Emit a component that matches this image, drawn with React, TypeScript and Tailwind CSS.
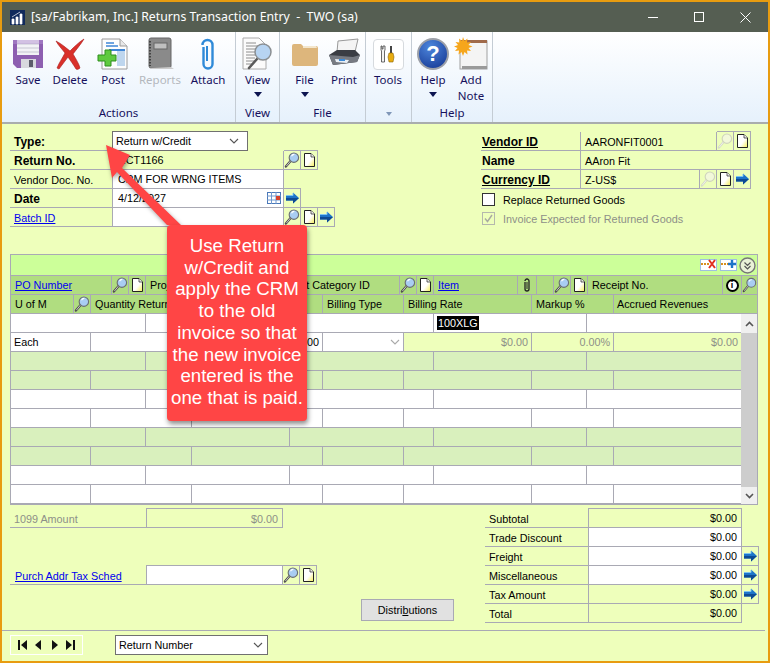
import type { ReactNode } from "react";

const ui = "font-['Liberation_Sans',Arial,sans-serif] text-[10.8px] leading-[18px] text-black";
const line = "border-[#a9a9b4]";

function SearchIcon({ off = false }: { off?: boolean }) {
  return (
    <svg width="17" height="18" viewBox="0 0 17 18">
      <path d="M7 10 2 16" stroke={off ? "#d6dcc4" : "#4a4a4a"} strokeWidth="2.4" strokeLinecap="round" />
      <path d="M7 10 2.5 15.5" stroke="#f5f5f5" strokeWidth="0.8" />
      <circle cx="10.5" cy="6.5" r="5" fill={off ? "#f2f8da" : "#a9cdf2"} stroke={off ? "#cfd4bd" : "#6b6f72"} strokeWidth="1.2" />
      {!off && <path d="M8 5a3 3 0 0 1 3-2" stroke="#fff" strokeWidth="1.2" fill="none" />}
    </svg>
  );
}

function NoteIcon() {
  return (
    <svg width="15" height="16" viewBox="0 0 15 16">
      <defs>
        <linearGradient id="noteFill" x1="0" y1="0" x2="1" y2="1">
          <stop offset="0.55" stopColor="#ffffff" />
          <stop offset="1" stopColor="#f6ee50" />
        </linearGradient>
      </defs>
      <path d="M2.5 1.5h6.5l3.5 3.5v9.500h-10z" fill="url(#noteFill)" stroke="#222" />
      <path d="M9 1.500v3.500h3.500" fill="#eee" stroke="#222" strokeWidth="0.7" />
    </svg>
  );
}

function GoIcon() {
  return (
    <svg width="15" height="14" viewBox="0 0 15 14">
      <path d="M8 1.500 14 7l-6 5.500V9.500H1v-5h7z" fill="#1d74c9" />
      <path d="M8 9.500H1V7h13l-6 5.500z" fill="#0d4a94" />
      <path d="M1 4.500h7V2" stroke="#7ec6f2" fill="none" />
    </svg>
  );
}

function Chevron({ color = "#555" }: { color?: string }) {
  return (
    <svg width="10" height="6" viewBox="0 0 10 6">
      <path d="M1 1l4 4 4-4" stroke={color} fill="none" strokeWidth="1.100" />
    </svg>
  );
}

function Cal() {
  return (
    <svg width="14" height="12" viewBox="0 0 14 12">
      <rect x="0.500" y="0.500" width="13" height="11" fill="#fff" stroke="#4a78b8" />
      <path d="M0 4h14M0 8h14M4.500 0v12M9 0v12" stroke="#6f98cf" />
      <rect x="9" y="4" width="4" height="4" fill="#d8402a" />
    </svg>
  );
}

function SmallCell({ children, w = "w-[17px]" }: { children?: ReactNode; w?: string }) {
  return (
    <div className={`${w} h-[20px] -mt-px shrink-0 flex items-center justify-center border border-l-0 ${line}`}>
      {children}
    </div>
  );
}

function FieldRow({
  label,
  labelClass = "",
  labelW,
  valueW,
  bg = "bg-[#eeffbb]",
  children,
  icons,
}: {
  label: ReactNode;
  labelClass?: string;
  labelW: string;
  valueW: string;
  bg?: string;
  children?: ReactNode;
  icons?: ReactNode;
}) {
  return (
    <div className="flex h-[19px] leading-[20px]">
      <div className={`${labelW} shrink-0 border-b ${line} pl-[4px] ${labelClass}`}>{label}</div>
      <div className={`${valueW} ${bg} shrink-0 border-l border-b border-r ${line} pl-[4px] flex items-center justify-between`}>
        {children}
      </div>
      {icons}
    </div>
  );
}

const link = "text-[#0000ee] underline";

function Field({ label, value, bold, linkLabel, white, icons, cal }: {
  label: string;
  value?: string;
  bold?: boolean;
  linkLabel?: boolean;
  white?: boolean;
  icons?: ReactNode;
  cal?: boolean;
}) {
  return (
    <FieldRow
      label={linkLabel ? <span className={link}>{label}</span> : label}
      labelClass={bold ? "font-bold text-[12px]" : ""}
      labelW="w-[102px]"
      valueW="w-[172px]"
      bg={white ? "bg-white" : "bg-[#eeffbb]"}
      icons={icons}
    >
      <span className="pl-[1px]">{value}</span>
      {cal && <span className="pr-[2px] flex"><Cal /></span>}
    </FieldRow>
  );
}

function VendorRow({ label, value, bold, icons, w }: { label: string; value: string; bold?: boolean; icons?: ReactNode; w: string }) {
  return (
    <div className="flex h-[19px] leading-[20px]">
      <div className={`w-[99px] shrink-0 border-b ${line} pl-[1px] font-bold text-[12px]`}>
        {bold ? <span className="underline">{label}</span> : label}
      </div>
      <div className={`${w} shrink-0 border-l border-b border-r ${line} pl-[4px]`}>{value}</div>
      {icons}
    </div>
  );
}

const rowA = ["w-[135px]", "w-[144px]", "w-[144px]", "w-[153px]", "w-[154px]"];
const rowB = ["w-[80px]", "w-[101px]", "w-[131px]", "w-[81px]", "w-[128px]", "w-[82px]", "w-[127px]"];

function BlankRow({ cols, bg }: { cols: string[]; bg: string }) {
  return (
    <div className={`flex h-[19px] border-b ${line} ${bg}`}>
      {cols.map((c, i) => (
        <div key={i} className={`${c} h-full ${i < cols.length - 1 ? `border-r ${line}` : ""}`} />
      ))}
    </div>
  );
}

function HeadCell({ w, children, icon }: { w: string; children?: ReactNode; icon?: boolean }) {
  return (
    <div className={`${w} shrink-0 h-full border-r ${line} ${icon ? "flex items-center justify-center" : "pl-[4px]"} whitespace-nowrap overflow-hidden`}>
      {children}
    </div>
  );
}

function RibbonButton({ w, label, icon, arrow, gray }: { w: string; label: ReactNode; icon: ReactNode; arrow?: boolean; gray?: boolean }) {
  return (
    <div className={`${w} flex flex-col items-center`}>
      <div className="h-[40px] pt-[4px] flex items-center justify-center">{icon}</div>
      <div className={`text-center leading-[16px] ${gray ? "text-[#b4b8bd]" : "text-[#16105c]"}`}>{label}</div>
      {arrow && <div className="mt-[4px] w-0 h-0 border-x-[4px] border-x-transparent border-t-[5px] border-t-[#0c1450]" />}
    </div>
  );
}

function RibbonGroup({ w, label, children, dim, pad = "justify-center" }: { w: string; label: ReactNode; children: ReactNode; dim?: boolean; pad?: string }) {
  return (
    <div className={`${w} h-full flex flex-col border-r border-[#c4ccd4] shrink-0`}>
      <div className={`flex flex-1 ${pad}`}>{children}</div>
      <div className={`h-[18px] text-center leading-[18px] ${dim ? "" : "text-[#16105c]"}`}>{label}</div>
    </div>
  );
}

function SaveIcon() {
  return (
    <svg width="32" height="32" viewBox="0 0 32 32">
      <path d="M1 2h30v28H5l-4-4z" fill="#8d5fb0" />
      <rect x="5" y="2" width="22" height="15" fill="#f2f2f6" />
      <path d="M5 6h22M5 10h22M5 14h22" stroke="#c6c6d2" />
      <rect x="9" y="21" width="15" height="9" fill="#d8d8de" />
      <rect x="17" y="22" width="4" height="7" fill="#5c5c6a" />
      <path d="M1 2h30v4H1z" fill="#b28fd0" opacity="0.5" />
    </svg>
  );
}

function DeleteIcon() {
  return (
    <svg width="32" height="32" viewBox="0 0 32 32">
      <path d="M2 3C8 6 12 10 16 13c4-4 9-9 14-12-3 5-8 11-11 15 3 5 6 10 7 14-1 1-3 2-4 1-3-5-6-9-8-12-3 4-6 8-9 12l-2-1c2-5 6-11 8-15C8 11 4 7 2 3z" fill="#d9302a" stroke="#a81c1c" strokeWidth="0.600" />
    </svg>
  );
}

function PostIcon() {
  return (
    <svg width="32" height="32" viewBox="0 0 32 32">
      <path d="M5 1h18l7 7v23H5z" fill="#fdfdfd" stroke="#9a9a9a" />
      <path d="M23 1v7h7" fill="#e8e8e8" stroke="#9a9a9a" />
      <path d="M9 5h8M9 8h12" stroke="#3f86d6" strokeWidth="1.400" />
      <rect x="20" y="12" width="8" height="16" fill="#bed6ee" />
      <path d="M12 12h16" stroke="#3f86d6" strokeWidth="2" />
      <path d="M8 12h6v5h5v6h-5v5H8v-5H1v-6h7z" fill="#5fca3f" stroke="#2f8f1f" />
    </svg>
  );
}

function ReportsIcon() {
  return (
    <svg width="28" height="34" viewBox="0 0 28 34">
      <rect x="3" y="1" width="22" height="30" rx="2" fill="#8a8a8a" stroke="#666" />
      <rect x="8" y="6" width="13" height="6" fill="#c0c0c0" stroke="#666" />
      <path d="M4 4v25" stroke="#444" strokeWidth="2" strokeDasharray="1.500 1.500" />
      <path d="M25 30l3 2H6l-3-1z" fill="#ccc" />
    </svg>
  );
}

function ClipIcon() {
  return (
    <svg width="16" height="34" viewBox="0 0 16 34">
      <path d="M4 9v17a4.500 4.500 0 0 0 9 0V7a5 5 0 0 0-10 0" transform="translate(-0.500 1)" fill="none" stroke="#2f8ad8" strokeWidth="2.400" />
      <path d="M7 9v15" stroke="#2f8ad8" strokeWidth="2" />
    </svg>
  );
}

function ViewIcon() {
  return (
    <svg width="32" height="34" viewBox="0 0 32 34">
      <path d="M1 1h16l7 7v24H1z" fill="#fbfbfb" stroke="#aaa" />
      <path d="M4 6h10M4 9h15M4 12h12M4 15h12M4 18h10M4 21h9M4 24h9M4 27h6" stroke="#8e8e8e" />
      <path d="M15 22 7 31" stroke="#5a5a5a" strokeWidth="2.600" strokeLinecap="round" />
      <circle cx="21" cy="15" r="8" fill="#b7d4f2" stroke="#8b8f92" strokeWidth="1.500" />
    </svg>
  );
}

function FolderIcon() {
  return (
    <svg width="28" height="26" viewBox="0 0 28 26">
      <path d="M1 5a2 2 0 0 1 2-2h7l2 2h13a2 2 0 0 1 2 2v16a2 2 0 0 1-2 2H3a2 2 0 0 1-2-2z" fill="#ddb67c" />
      <path d="M12 5h13l1 2H12z" fill="#f3e6cd" />
    </svg>
  );
}

function PrintIcon() {
  return (
    <svg width="34" height="32" viewBox="0 0 34 32">
      <path d="M11 3 31 1l-3 13H10z" fill="#f4f4f4" stroke="#999" />
      <path d="M2 17l8-5h18l5 5-3 7-24 3z" fill="#3a3d44" />
      <path d="M2 17l24 2 7-2-3 7-24 3z" fill="#767a82" />
      <path d="M8 21l14 1-2 3-11-1z" fill="#e8eef5" />
      <rect x="12" y="21" width="6" height="2" fill="#3b8ad8" />
    </svg>
  );
}

function ToolsIcon() {
  return (
    <div className="w-[31px] h-[31px] rounded-[4px] border border-[#d6dade] bg-white flex items-center justify-center">
      <svg width="18" height="18" viewBox="0 0 18 18">
        <path d="M3 1v3h1V1h2v4L5.500 6v11h-3V6L2 5V1z" fill="#f3f3f3" stroke="#444" strokeWidth="0.800" />
        <rect x="11" y="1" width="2" height="7" fill="#444" />
        <path d="M10 8h4l1 4-1 5h-4l-1-5z" fill="#e8ac10" stroke="#8a6408" strokeWidth="0.600" />
      </svg>
    </div>
  );
}

function HelpIcon() {
  return (
    <div className="w-[32px] h-[32px] rounded-full border-[2px] border-[#9ca0a8] bg-[radial-gradient(circle_at_40%_25%,#4d86dc,#12338f)] flex items-center justify-center text-white font-['Liberation_Sans',Arial,sans-serif] font-bold text-[22px] leading-none">
      ?
    </div>
  );
}

function AddNoteIcon() {
  return (
    <svg width="34" height="34" viewBox="0 0 34 34">
      <rect x="6" y="4" width="27" height="28" fill="#f4f4f4" stroke="#a0a0a0" />
      <rect x="6" y="3" width="27" height="3" fill="#a06a4a" />
      <rect x="8" y="29" width="25" height="3" fill="#9a9a9a" />
      <path d="M9 0l1.500 4 3-2.500-.5 4 4-.5-2.500 3 4 1.500-4 1.500 2.500 3-4-.5.500 4-3-2.500L9 19l-1.500-4-3 2.500.5-4-4 .5 2.500-3L0 9.500 4 8 1.500 5l4 .5-.5-4 3 2.500z" fill="#f6a61c" />
    </svg>
  );
}

function Callout() {
  return (
    <>
      <svg className="absolute left-0 top-0 drop-shadow-[1px_2px_2px_rgba(0,0,0,0.35)]" width="200" height="240" viewBox="0 0 200 240">
        <polygon points="106,145 130,155 122,168 181,225 167,225 117,172 112,178" fill="#ff4545" />
      </svg>
      <div className="absolute left-[167px] top-[225px] w-[140px] h-[196px] rounded-[4px] bg-[#ff4545] shadow-[1px_3px_5px_rgba(0,0,0,0.45)] pt-[10px] text-center text-white font-['Liberation_Sans',Arial,sans-serif] text-[18.700px] leading-[21.700px]">
        Use Return
        <br />
        w/Credit and
        <br />
        apply the CRM
        <br />
        to the old
        <br />
        invoice so that
        <br />
        the new invoice
        <br />
        entered is the
        <br />
        one that is paid.
      </div>
    </>
  );
}

export default function App() {
  return (
    <div className={`relative w-[770px] h-[663px] overflow-hidden border-2 border-[#e89c10] flex flex-col ${ui}`}>
      {/* title bar */}
      <div className="h-[30px] shrink-0 bg-[#555e52] flex items-center text-white font-['Noto_Sans',sans-serif] text-[12.300px]">
        <svg className="ml-[8px] mr-[6px]" width="15" height="15" viewBox="0 0 15 15">
          <rect width="15" height="15" fill="#102a5c" />
          <path d="M2 14V9h2v5zM6 14V7h2v7zM10 14V4h2v10zM2 7l8-5" stroke="#fff" fill="#fff" strokeWidth="0.700" />
        </svg>
        <span>[sa/Fabrikam, Inc.] Returns Transaction Entry&nbsp; -&nbsp; TWO (sa)</span>
        <div className="ml-auto flex items-center text-white">
          <div className="w-[10px] h-px bg-white mr-[36px]" />
          <div className="w-[10px] h-[10px] border border-white mr-[36px]" />
          <svg className="mr-[17px]" width="11" height="11" viewBox="0 0 11 11">
            <path d="M.5.500l10 10M10.500.500l-10 10" stroke="#fff" />
          </svg>
        </div>
      </div>

      {/* ribbon */}
      <div className="h-[92px] shrink-0 flex border-b-2 border-[#a9adad] bg-gradient-to-b from-white to-[#e6f1fc] font-['Noto_Sans',sans-serif] text-[11.500px]">
        <RibbonGroup w="w-[234px]" label="Actions" pad="pl-[5px]">
          <RibbonButton w="w-[42px]" label="Save" icon={<SaveIcon />} />
          <RibbonButton w="w-[42px]" label="Delete" icon={<DeleteIcon />} />
          <RibbonButton w="w-[44px]" label="Post" icon={<PostIcon />} />
          <RibbonButton w="w-[50px]" label="Reports" gray icon={<ReportsIcon />} />
          <RibbonButton w="w-[46px]" label="Attach" icon={<ClipIcon />} />
        </RibbonGroup>
        <RibbonGroup w="w-[44px]" label="View">
          <RibbonButton w="w-[43px]" label="View" arrow icon={<ViewIcon />} />
        </RibbonGroup>
        <RibbonGroup w="w-[86px]" label="File" pad="pl-[5px]">
          <RibbonButton w="w-[39px]" label="File" arrow icon={<FolderIcon />} />
          <RibbonButton w="w-[40px]" label="Print" icon={<PrintIcon />} />
        </RibbonGroup>
        <RibbonGroup
          w="w-[46px]"
          dim
          pad="justify-start"
          label={<span className="inline-block w-0 h-0 border-x-[3px] border-x-transparent border-t-[4px] border-t-[#7f96b8] align-middle" />}
        >
          <RibbonButton w="w-[44px]" label="Tools" icon={<ToolsIcon />} />
        </RibbonGroup>
        <RibbonGroup w="w-[81px]" label="Help" pad="pl-[1px]">
          <RibbonButton w="w-[40px]" label="Help" arrow icon={<HelpIcon />} />
          <RibbonButton w="w-[36px]" label={<>Add<br />Note</>} icon={<AddNoteIcon />} />
        </RibbonGroup>
      </div>

      {/* form */}
      <div className="flex-1 bg-[#eeffbb] flex flex-col">
        <div className="pl-[8px] pt-[8px] flex h-[103px]">
          <div className="w-[324px] shrink-0">
            <div className="flex h-[19px] leading-[20px]">
              <div className={`w-[102px] border-b ${line} pl-[4px] font-bold text-[12px]`}>Type:</div>
              <div className="w-[136px] h-[20px] -mt-px border border-[#707070] bg-white pl-[3px] flex items-center justify-between pr-[8px]">
                Return w/Credit
                <Chevron />
              </div>
            </div>
            <Field label="Return No." value="RCT1166" bold icons={<><SmallCell><SearchIcon /></SmallCell><SmallCell><NoteIcon /></SmallCell></>} />
            <Field label="Vendor Doc. No." value="CRM FOR WRNG ITEMS" white />
            <Field label="Date" value="4/12/2027" bold white cal icons={<SmallCell><GoIcon /></SmallCell>} />
            <Field label="Batch ID" linkLabel white icons={<><SmallCell><SearchIcon /></SmallCell><SmallCell><NoteIcon /></SmallCell><SmallCell><GoIcon /></SmallCell></>} />
          </div>
          <div className="ml-[147px] w-[270px] shrink-0">
            <VendorRow label="Vendor ID" value="AARONFIT0001" bold w="w-[137px]" icons={<><SmallCell><SearchIcon off /></SmallCell><SmallCell><NoteIcon /></SmallCell></>} />
            <VendorRow label="Name" value="AAron Fit" w="w-[171px]" />
            <VendorRow label="Currency ID" value="Z-US$" bold w="w-[120px]" icons={<><SmallCell><SearchIcon off /></SmallCell><SmallCell><NoteIcon /></SmallCell><SmallCell><GoIcon /></SmallCell></>} />
            <div className="flex items-center h-[19px] mt-[1px] pl-[1px]">
              <div className="w-[13px] h-[13px] border border-[#333] bg-white" />
              <span className="ml-[8px]">Replace Returned Goods</span>
            </div>
            <div className="flex items-center h-[19px] pl-[1px] text-[#8d8f88]">
              <div className="w-[13px] h-[13px] border border-[#b5b8ad] flex items-center justify-center">
                <svg width="11" height="11" viewBox="0 0 11 11">
                  <path d="M2 5.500l2.500 3L9 2" stroke="#a8aaa0" fill="none" strokeWidth="1.400" />
                </svg>
              </div>
              <span className="ml-[8px]">Invoice Expected for Returned Goods</span>
            </div>
          </div>
        </div>

        {/* scrolling window */}
        <div className="mt-[27px] ml-[8px] w-[748px] border-x border-t border-[#a9a9b4]">
          <div className={`h-[21px] bg-[#ccff99] border-b ${line} flex items-center justify-end pr-[1px]`}>
            <svg className="mr-[3px]" width="17" height="14" viewBox="0 0 17 14">
              <rect x="0.500" y="1.500" width="16" height="11" fill="#fff" stroke="#9fc0e0" />
              <path d="M1 6h8" stroke="#d89020" strokeWidth="2" strokeDasharray="2 1" />
              <path d="M9 2l6 8M15 2 9 10" stroke="#e03020" strokeWidth="2" />
            </svg>
            <svg className="mr-[2px]" width="17" height="14" viewBox="0 0 17 14">
              <rect x="0.500" y="1.500" width="16" height="11" fill="#fff" stroke="#9fc0e0" />
              <path d="M1 6h8" stroke="#d89020" strokeWidth="2" strokeDasharray="2 1" />
              <path d="M12 2v8M8 6h8" stroke="#1d74c9" strokeWidth="2.400" />
            </svg>
            <svg width="17" height="17" viewBox="0 0 17 17">
              <circle cx="8.500" cy="8.500" r="7.500" fill="#eaf3d8" stroke="#777" strokeWidth="1.400" />
              <path d="M5.500 5.500l3 3 3-3M5.500 9l3 3 3-3" stroke="#555" fill="none" strokeWidth="1.200" />
            </svg>
          </div>
          <div className={`flex h-[19px] leading-[19px] bg-[#b0dd80] border-b ${line}`}>
            <HeadCell w="w-[101px]"><span className={link}>PO Number</span></HeadCell>
            <HeadCell w="w-[17px]" icon><SearchIcon /></HeadCell>
            <HeadCell w="w-[17px]" icon><NoteIcon /></HeadCell>
            <HeadCell w="w-[137px]">Project No.</HeadCell>
            <HeadCell w="w-[117px]">Cost Category ID</HeadCell>
            <HeadCell w="w-[17px]" icon><SearchIcon /></HeadCell>
            <HeadCell w="w-[17px]" icon><NoteIcon /></HeadCell>
            <HeadCell w="w-[84px]"><span className={link}>Item</span></HeadCell>
            <HeadCell w="w-[19px]" icon>
              <svg width="8" height="15" viewBox="0 0 8 15">
                <path d="M2 4v7a2 2 0 0 0 4 0V3a2 2 0 0 0-4 0" fill="none" stroke="#222" strokeWidth="1.300" />
                <path d="M4 4v7" stroke="#222" />
              </svg>
            </HeadCell>
            <HeadCell w="w-[17px]" />
            <HeadCell w="w-[17px]" icon><SearchIcon /></HeadCell>
            <HeadCell w="w-[17px]" icon><NoteIcon /></HeadCell>
            <HeadCell w="w-[135px]">Receipt No.</HeadCell>
            <HeadCell w="w-[19px]" icon>
              <div className="w-[13px] h-[13px] rounded-full bg-white border-2 border-black flex items-center justify-center text-[9px] leading-none font-bold">i</div>
            </HeadCell>
            <div className="w-[15px] flex items-center justify-center"><SearchIcon /></div>
          </div>
          <div className={`flex h-[19px] leading-[19px] bg-[#b0dd80] border-b ${line}`}>
            <HeadCell w="w-[63px]">U of M</HeadCell>
            <HeadCell w="w-[17px]" icon><SearchIcon /></HeadCell>
            <HeadCell w="w-[101px]">Quantity Returned</HeadCell>
            <HeadCell w="w-[131px]" />
            <HeadCell w="w-[81px]">Billing Type</HeadCell>
            <HeadCell w="w-[128px]">Billing Rate</HeadCell>
            <HeadCell w="w-[82px]">Markup %</HeadCell>
            <div className="pl-[3px]">Accrued Revenues</div>
          </div>
          <div className="flex">
            <div className="w-[730px] shrink-0">
              <div className={`flex h-[19px] border-b ${line} bg-white`}>
                {rowA.map((c, i) => (
                  <div key={c + i} className={`${c} h-full ${i < 4 ? `border-r ${line}` : ""} ${i === 3 ? "pl-[3px] pt-[2px]" : ""}`}>
                    {i === 3 && <span className="bg-black text-white block w-fit h-[14px] leading-[14px] px-[1px]">100XLG</span>}
                  </div>
                ))}
              </div>
              <div className={`flex h-[19px] border-b ${line} bg-white`}>
                <div className={`${rowB[0]} border-r ${line} pl-[3px]`}>Each</div>
                <div className={`${rowB[1]} border-r ${line}`} />
                <div className={`${rowB[2]} border-r ${line} text-right pr-[3px]`}>$0.00</div>
                <div className={`${rowB[3]} border-r ${line} flex items-center justify-end pr-[3px]`}>
                  <Chevron color="#aaa" />
                </div>
                <div className={`${rowB[4]} border-r ${line} bg-[#eeffbb] text-right pr-[3px] text-[#8d8f88]`}>$0.00</div>
                <div className={`${rowB[5]} border-r ${line} bg-[#eeffbb] text-right pr-[3px] text-[#8d8f88]`}>0.00%</div>
                <div className={`${rowB[6]} bg-[#eeffbb] text-right pr-[3px] text-[#8d8f88]`}>$0.00</div>
              </div>
              <BlankRow cols={rowA} bg="bg-[#d9f0bd]" />
              <BlankRow cols={rowB} bg="bg-[#d9f0bd]" />
              <BlankRow cols={rowA} bg="bg-white" />
              <BlankRow cols={rowB} bg="bg-white" />
              <BlankRow cols={rowA} bg="bg-[#d9f0bd]" />
              <BlankRow cols={rowB} bg="bg-[#d9f0bd]" />
              <BlankRow cols={rowA} bg="bg-white" />
              <BlankRow cols={rowB} bg="bg-white" />
            </div>
            <div className="w-[16px] flex flex-col bg-[#cdcdcd]">
              <div className="h-[19px] bg-[#f0f0f0] flex items-center justify-center">
                <svg width="9" height="6" viewBox="0 0 9 6"><path d="M1 5l3.500-3.500L8 5" stroke="#555" fill="none" strokeWidth="1.600" /></svg>
              </div>
              <div className="flex-1" />
              <div className="h-[17px] bg-[#f0f0f0] flex items-center justify-center">
                <svg width="9" height="6" viewBox="0 0 9 6"><path d="M1 1l3.500 3.500L8 1" stroke="#555" fill="none" strokeWidth="1.600" /></svg>
              </div>
            </div>
          </div>
          <div className="h-px bg-[#a9a9b4]" />
        </div>

        {/* totals area */}
        <div className="mt-[4px] ml-[8px] flex h-[121px] leading-[20px]">
          <div className="w-[351px] shrink-0">
            <div className="flex h-[19px] text-[#8d8f88]">
              <div className={`w-[136px] border-b ${line} pl-[4px]`}>1099 Amount</div>
              <div className={`w-[137px] border border-t ${line} h-[20px] -mt-px text-right pr-[4px]`}>$0.00</div>
            </div>
            <div className="h-[38px]" />
            <div className="flex h-[19px]">
              <div className={`w-[136px] border-b ${line} pl-[5px]`}><span className={link}>Purch Addr Tax Sched</span></div>
              <div className={`w-[137px] h-[20px] -mt-px bg-white border ${line}`} />
              <SmallCell><SearchIcon /></SmallCell>
              <SmallCell><NoteIcon /></SmallCell>
            </div>
          </div>
          <div className="w-[93px] shrink-0">
            <div className={`mt-[90px] h-[22px] bg-[#e1e1e1] border ${line} flex items-center justify-center`}>
              <span>Distri<span className="underline">b</span>utions</span>
            </div>
          </div>
          <div className="ml-[31px] w-[274px] shrink-0">
            {[
              { label: "Subtotal", bg: "" },
              { label: "Trade Discount", bg: "bg-white" },
              { label: "Freight", bg: "bg-white", go: true },
              { label: "Miscellaneous", bg: "bg-white", go: true },
              { label: "Tax Amount", bg: "", go: true },
              { label: "Total", bg: "" },
            ].map((r) => (
              <div key={r.label} className="flex h-[19px]">
                <div className={`w-[103px] shrink-0 border-b ${line} pl-[4px]`}>{r.label}</div>
                <div className={`w-[154px] shrink-0 h-[20px] -mt-px border ${line} ${r.bg} text-right pr-[4px] leading-[18px]`}>$0.00</div>
                {r.go && <SmallCell><GoIcon /></SmallCell>}
              </div>
            ))}
          </div>
        </div>

        {/* browse buttons */}
        <div className="mr-[3px] border-t border-[#a9a9b4] pl-[8px] pt-[4px] flex">
          <div className="w-[73px] h-[20px] border border-white flex items-center justify-around px-[3px]">
            <svg width="9" height="10" viewBox="0 0 9 10"><path d="M0 0h2v10H0zM9 0v10L3 5z" fill="#111" /></svg>
            <svg width="7" height="10" viewBox="0 0 7 10"><path d="M6 0v10L0 5z" fill="#111" /></svg>
            <svg width="7" height="10" viewBox="0 0 7 10"><path d="M1 0v10l6-5z" fill="#111" /></svg>
            <svg width="9" height="10" viewBox="0 0 9 10"><path d="M0 0v10l6-5zM7 0h2v10H7z" fill="#111" /></svg>
          </div>
          <div className="ml-[32px] w-[153px] h-[20px] border border-[#707070] bg-white pl-[3px] pr-[4px] flex items-center justify-between">
            Return Number
            <Chevron />
          </div>
        </div>
      </div>
      <div className="absolute -left-[2px] -top-[2px]">
        <Callout />
      </div>
    </div>
  );
}
